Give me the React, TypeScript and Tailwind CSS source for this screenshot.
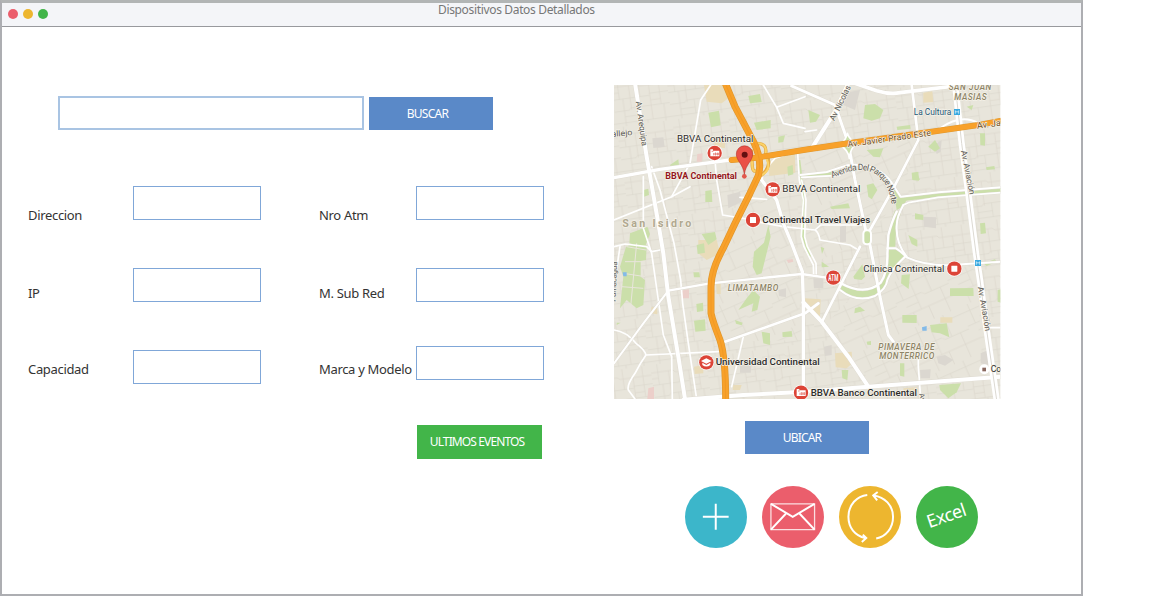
import React from "react";

const parks = [
  "295,98 327,92 332,136 303,142", "415,48 450,42 455,66 420,70", "432,128 482,120 482,145 440,150",
  "286,333 305,330 307,366 286,366", "180,255 205,238 207,256 186,270", "505,170 525,166 520,186 505,188",
  "275,462 315,456 320,478 295,495", "60,460 112,440 120,462 105,500 58,490", "100,330 115,326 117,345 102,350",
  "765,75 795,72 820,90 810,115 785,122 760,115", "595,90 630,105 618,125 600,128", "770,210 820,205 810,232 790,230",
  "955,200 975,180 990,205 975,215", "905,295 920,275 930,300", "770,315 790,310 802,330 785,358 775,350",
  "660,380 715,370 720,385 665,387", "532,260 548,255 550,283 534,287", "915,400 940,405 940,420 915,418",
  "1110,160 1125,160 1125,197 1111,195", "1128,262 1153,258 1155,268 1130,270", "860,140 900,135 902,146 862,150",
  "1110,430 1125,428 1128,460 1112,462", "1070,80 1090,75 1085,90", "48,500 73,488 110,495 108,540 92,543 92,590 105,600 100,675 80,685 50,660 30,685 40,590 30,560",
  "260,495 282,490 285,518 263,522", "250,577 268,577 270,592 252,592", "259,672 279,668 280,693 261,696",
  "252,722 285,718 287,752 256,755", "475,435 482,470 455,580 440,585 428,560 432,515 462,488", "430,630 450,650 442,690 425,695 430,670 385,690 410,655",
  "517,757 545,753 547,770 518,771", "455,755 480,760 480,795 460,790", "375,720 398,728 395,736 378,731",
  "730,590 757,553 765,590 755,600 733,597", "875,585 900,583 896,627 873,610", "1020,625 1090,624 1091,648 1020,648",
  "735,685 750,680 765,692 733,700", "877,705 920,705 920,729 877,728", "960,735 1010,730 1018,772 990,760 965,757",
  "988,915 1053,910 1040,937 1015,955 990,930", "870,850 883,850 883,890 870,887", "695,870 715,870 712,900 697,895",
  "1163,630 1173,628 1173,668 1163,665", "770,785 783,783 783,795 772,794", "635,545 657,560 635,562", "632,500 643,505 636,522",
  "895,465 922,480 922,500 905,492", "905,278 925,275 927,302 907,300",
  "1120,550 1155,538 1160,545 1130,558", "20,735 20,728 32,728",
];

const sand = [
  "282,15 340,15 355,55 335,70 290,65", "310,170 345,168 345,205 315,200", "265,480 320,480 330,520 290,540 265,520",
  "490,235 555,220 556,278 478,288 475,270", "940,38 967,34 970,66 940,68", "585,655 632,658 630,712 612,708 585,675",
  "675,820 725,815 727,850 710,865 677,862", "991,712 1027,712 1027,728 991,728", "252,860 280,855 280,880 254,882",
  "125,680 142,685 142,703 122,700", "318,610 332,610 332,642 320,642", "370,915 395,915 390,930 368,930", "880,925 920,922 925,935 880,937",
];

const blocks = [
  "352,345 390,335 395,365 355,385", "700,40 750,30 735,90 700,75", "972,195 995,180 992,215 980,222",
  "940,410 978,412 978,445 942,440", "610,595 640,595 640,625 612,625", "505,630 528,625 528,652 507,648",
  "980,830 1005,825 1030,840 1005,857 985,850", "930,870 962,868 960,895 932,895", "390,855 425,850 422,878 390,878",
  "127,175 160,172 164,200 130,204", "642,800 665,795 665,825 645,828", "1112,820 1135,810 1135,855 1112,850", "690,440 708,435 708,485 690,487",
];

const pink = ["262,222 278,220 275,245 260,245", "212,632 237,628 237,655 215,655", "115,925 132,920 132,957 112,957", "530,540 548,537 550,545 535,549"];

const lanes = [
  "M302,15 L272,60 L240,250 L185,350 L12,420", "M185,350 L240,320 M100,290 L100,445 L125,520 L160,765 L185,830 L187,957",
  "M125,260 L150,330 L192,490 L212,600 L218,670 L235,790 L260,957",
  "M315,240 L320,300 L338,405 L440,422 M12,500 L45,492 L110,500 L125,515 L150,510",
  "M460,15 L500,82 L520,130 L585,145 M500,82 L585,50",
  "M390,352 L470,358 M450,285 L495,235 L555,215",
  "M12,750 Q50,755 78,790 Q105,810 108,825 L325,815 M108,825 Q90,850 75,880 Q50,915 55,930 L75,957",
  "M400,770 L365,920 M925,820 L925,860 L932,955",
  "M440,425 L520,440 L615,450 Q625,455 630,480 L720,495 L745,510 M615,450 L632,435 L755,435",
  "M563,220 L568,300 L580,360 L574,470 L582,500 L610,555 L611,585 M575,300 L588,360 L584,470 L592,500 L618,550 L619,585",
  "M585,155 L620,150 M1140,743 L1173,743 M30,500 L12,620",
];

const roads: [string, number][] = [
  ["M175,632 L300,610 L575,582 L645,592 L690,608 Q765,650 812,608 Q834,575 832,520 L835,465 Q845,425 860,395", 7],
  ["M175,632 L100,730 L12,850", 6],
  ["M345,785 L585,700 L625,670", 8],
  ["M455,265 L455,300 L500,360 L520,430 L545,490 L577,575 L580,665 L580,945", 10],
  ["M580,667 L635,725 L715,830 L775,920", 12],
  ["M635,727 L750,500 M780,450 L850,325 L925,180 L905,15", 8],
  ["M545,18 L675,75 L715,190 L735,300 L767,450 M780,495 L810,650 L835,765 L850,785", 9],
  ["M715,10 L675,95 L605,205", 12],
  ["M720,5 L800,32 Q840,44 870,38 L1035,18", 11],
  ["M570,285 L650,276 L710,256 Q800,245 845,308 L872,350 L985,337 L1173,322", 6],
  ["M575,292 L690,286 M880,375 L895,368 L985,352 L1173,338", 5],
  ["M832,505 L858,505 Q875,515 890,532 Q940,555 1010,556 L1173,545", 6],
  ["M690,630 Q740,670 795,648 Q830,625 832,600 Q842,570 885,530", 6],
  ["M880,375 Q860,410 860,440 Q858,490 890,530", 6],
  ["M12,293 L150,268 L360,240", 10],
  ["M75,10 L110,230 L145,430 L160,520 L175,650 L205,830 L225,957", 12],
  ["M220,959 L400,945 L585,935 L775,920 L1173,890", 12],
];

const freeway = "M345,8 L375,80 L430,184 Q458,240 445,287 L420,340 L375,430 L340,504 Q303,570 303,620 L303,700 Q308,724 330,780 Q347,830 347,960";
const prado = "M365,240 L440,233 L585,209 L715,190 L965,155 L1100,136 L1180,121";

function Label({ x, y, w, size = 29, fill = "#2d2d2d", weight = 500, italic = false, rotate = 0, spaced = false, children }: {
  x: number; y: number; w?: number; size?: number; fill?: string; weight?: number; italic?: boolean; rotate?: number; spaced?: boolean; children: string;
}) {
  return (
    <text x={x} y={y} textLength={w} lengthAdjust={spaced ? "spacing" : "spacingAndGlyphs"} fontSize={size} fill={fill}
      fontWeight={weight} fontStyle={italic ? "italic" : "normal"} transform={`rotate(${rotate} ${x} ${y})`}
      stroke="#f6f3ea" strokeWidth="4" strokeLinejoin="round" paintOrder="stroke">{children}</text>
  );
}

function Poi({ x, y, kind }: { x: number; y: number; kind: "bank" | "square" | "atm" | "school" }) {
  return (
    <g transform={`translate(${x} ${y})`}>
      <circle r="24" fill="#fff" opacity=".8" />
      <circle r="21.5" fill="#dc4437" />
      {kind === "square" && <rect x="-9" y="-9" width="18" height="18" rx="1" fill="#fff" />}
      {kind === "bank" && <g><path d="M-13,-11 H-5 V-7 H14 V10 H-13Z" fill="#fff" /><path d="M-9,-5 h5 M-3,0 v7 M1,0 h3 v6 h-3z M8,0 h3 v6 h-3z" stroke="#dc4437" strokeWidth="1.8" fill="none" /></g>}
      {kind === "atm" && <text x="-15" y="10" textLength="30" lengthAdjust="spacingAndGlyphs" fontSize="27" fontWeight="700" fill="#fff">ATM</text>}
      {kind === "school" && <path d="M-16,-4 L0,-12 L16,-4 L0,4Z M-12,1 L0,8 L12,1 V8 Q0,17 -12,8Z" fill="#fff" />}
    </g>
  );
}

function CityMap() {
  return (
    <svg className="block h-[314px] w-[387px] shrink-0" viewBox="12 15 1161 942" fontFamily="Roboto, sans-serif">
      <defs>
        <pattern id="streets" width="168" height="144" patternUnits="userSpaceOnUse" patternTransform="rotate(-8)">
          <path d="M0,24 H66 L72,30 H168 M0,62 H110 M110,56 H168 M0,98 H45 L50,92 H168 M0,134 H168 M20,0 V62 M52,24 V98 M82,0 V62 M112,30 V134 M142,0 V92 M30,62 V144 M74,92 V134 M150,92 V144 M96,134 V144 M0,42 H20 M112,76 H142 M30,116 H74" fill="none" stroke="#dbd7cc" strokeWidth="2" />
        </pattern>
        <pattern id="streetsEast" width="170" height="150" patternUnits="userSpaceOnUse" patternTransform="rotate(-24)">
          <path d="M0,20 H170 M0,62 H84 L92,70 H170 M0,108 H170 M25,0 V62 M65,20 V108 M114,0 V70 M142,70 V150 M38,108 V150 M88,108 V150 M25,85 H65" fill="none" stroke="#dbd7cc" strokeWidth="2" />
        </pattern>
        <clipPath id="mapFrame"><rect x="12" y="15" width="1159" height="942" /></clipPath>
      </defs>
      <g clipPath="url(#mapFrame)">
        <rect x="12" y="15" width="1161" height="942" fill="#e8e5db" />
        <rect x="12" y="15" width="1161" height="942" fill="url(#streets)" />
        <path d="M345,480 L450,270 L550,500 L580,780 L345,785 L303,650Z M585,220 L925,180 L870,354 L755,490 L580,560Z M810,560 H1100 L1120,890 L780,920 L650,730Z" fill="#e8e5db" />
        <path d="M345,480 L450,270 L550,500 L580,780 L345,785 L303,650Z M585,220 L925,180 L870,354 L755,490 L580,560Z M810,560 H1100 L1120,890 L780,920 L650,730Z" fill="url(#streetsEast)" />
        {blocks.map((p) => <polygon key={p} points={p} fill="#dbd7d0" />)}
        {sand.map((p) => <polygon key={p} points={p} fill="#e9dcba" />)}
        {pink.map((p) => <polygon key={p} points={p} fill="#eccfca" />)}
        {parks.map((p) => <polygon key={p} points={p} fill="#cbdfaa" />)}
        <path d="M50,500 L108,510 M45,545 L105,545 M40,580 L105,590 M35,620 L100,625 M80,490 L62,680" stroke="#e9e5dc" strokeWidth="3" />
        <path d="M690,610 Q765,650 812,608 Q834,575 832,505 L858,505 L885,530 Q842,570 832,600 Q830,625 795,648 Q740,670 690,630Z" fill="#cbdfaa" />
        <path d="M575,289 L700,276 M872,358 L985,345 L1173,330" fill="none" stroke="#cbdfaa" strokeWidth="12" />
        <path d="M850,325 L872,350 L890,360 L878,380 L860,390Z" fill="#cbdfaa" />
        <path d="M864,395 Q846,435 846,500" fill="none" stroke="#cbdfaa" strokeWidth="20" />
        <path d="M568,240 L580,340 L579,470 L600,530" fill="none" stroke="#cbdfaa" strokeWidth="6" />
        <path d="M38,577 h12 v12 h-10z M936,742 l14,-4 v14 h-13z" fill="#83bae8" />

        <g fill="none" strokeLinejoin="round" strokeLinecap="round">
          {lanes.map((d) => <path key={d} d={d} stroke="#fff" strokeWidth="5" />)}
          {roads.map(([d, w]) => <path key={d} d={d} stroke="#dedad0" strokeWidth={w + 2} />)}
          {roads.map(([d, w]) => <path key={d} d={d} stroke="#fff" strokeWidth={w} />)}
          <rect x="760" y="451" width="23" height="42" rx="10" fill="#cbdfaa" stroke="#fff" strokeWidth="6" />
          <path d="M690,195 Q708,180 712,160 Q718,180 740,190 Q720,205 718,235 Q715,210 690,195Z" fill="#cbdfaa" stroke="#fff" strokeWidth="5" />
          <path d="M990,145 Q1055,100 1105,130" stroke="#fff" strokeWidth="6" />
          <path d="M1035,10 L1055,190 L1075,340 L1098,520 L1110,600 L1130,750 L1160,960" stroke="#fff" strokeWidth="19" />
          <path d="M1035,10 L1055,190 L1075,340 L1098,520 L1110,600 L1130,750 L1160,960" stroke="#dcd9d2" strokeWidth="3" />
          <path d="M441,190 Q472,190 467,220 Q490,255 455,285 M424,212 L427,260 Q428,278 442,272" stroke="#e4aa45" strokeWidth="10" />
          <path d="M441,190 Q472,190 467,220 M470,237 Q485,270 455,285 M424,212 L427,260 Q428,278 442,272" stroke="#fbd268" strokeWidth="6" />
          <path d={freeway} stroke="#df972e" strokeWidth="21" />
          <path d={prado} stroke="#df972e" strokeWidth="18" />
          <path d={freeway} stroke="#f8a12a" strokeWidth="17" />
          <path d={prado} stroke="#f8a12a" strokeWidth="15" />
          <path d={freeway} stroke="#ed9622" strokeWidth="2" />
        </g>

        <g>
          <Label x={77} y={65} w={135} size={25} weight={400} rotate={82} fill="#5d5a55">Av. Arequipa</Label>
          <Label x={5} y={171} w={63} size={25} weight={400} rotate={-5} fill="#5d5a55">allejo</Label>
          <Label x={17} y={665} w={120} size={23} weight={400} rotate={-88} fill="#5d5a55">Pumacagua</Label>
          <Label x={673} y={124} w={115} size={25} weight={400} rotate={-64} fill="#5d5a55">Av Nicolas</Label>
          <Label x={714} y={202} w={252} size={26} weight={400} rotate={-8} fill="#704e1c" spaced>Av. Javier Prado Este</Label>
          <Label x={1102} y={146} size={27} weight={400} rotate={-7} fill="#704e1c">Av. Javier</Label>
          <Label x={1053} y={213} w={134} size={25} weight={400} rotate={79} fill="#5d5a55">Av. Aviación</Label>
          <Label x={1103} y={622} w={134} size={25} weight={400} rotate={80} fill="#5d5a55">Av. Aviación</Label>
          <path id="parkAvenue" d="M667,294 Q690,284 720,274 Q780,260 815,298 Q846,335 848,402" fill="none" />
          <text fontSize="26" fill="#5d5a55" stroke="#f2efe5" strokeWidth="4" paintOrder="stroke">
            <textPath href="#parkAvenue" textLength="242" lengthAdjust="spacing">Avenida Del Parque Norte</textPath>
          </text>
          <Label x={37} y={440} w={207} size={32} weight={700} spaced fill="#b0a78f">San Isidro</Label>
          <Label x={353} y={632} w={152} size={25} italic spaced fill="#8d8467">LIMATAMBO</Label>
          <Label x={1016} y={31} w={128} size={25} italic spaced fill="#8d8467">SAN JUAN</Label>
          <Label x={1033} y={60} w={97} size={25} italic spaced fill="#8d8467">MASIAS</Label>
          <Label x={805} y={809} w={169} size={25} italic spaced fill="#8d8467">PIMAVERA DE</Label>
          <Label x={808} y={837} w={165} size={25} italic spaced fill="#8d8467">MONTERRICO</Label>
          <Label x={201} y={186} w={229} weight={400}>BBVA Continental</Label>
          <Label x={166} y={297} w={215} size={27} weight={700} fill="#94151c">BBVA Continental</Label>
          <Label x={517} y={337} w={234} weight={400}>BBVA Continental</Label>
          <Label x={457} y={430} w={324}>Continental Travel Viajes</Label>
          <Label x={760} y={576} w={243} weight={400}>Clinica Continental</Label>
          <Label x={317} y={855} w={312}>Universidad Continental</Label>
          <Label x={602} y={948} w={319}>BBVA Banco Continental</Label>
          <Label x={911} y={105} w={113} size={26} weight={400} fill="#245778">La Cultura</Label>
          <Label x={1142} y={876} size={26} weight={400}>Continental</Label>
          <Label x={927} y={942} size={22} weight={400} fill="#5d5a55" rotate={75}>Av</Label>
        </g>
        <Poi x={314} y={219} kind="bank" />
        <Poi x={488} y={328} kind="bank" />
        <Poi x={429} y={420} kind="square" />
        <Poi x={670} y={593} kind="atm" />
        <Poi x={1033} y={566} kind="square" />
        <Poi x={289} y={847} kind="school" />
        <Poi x={573} y={938} kind="bank" />
        <circle cx="1123" cy="868" r="15" fill="#fff" /><rect x="1117" y="863" width="11" height="11" fill="#89685f" />
        {[[1032, 87], [1095, 540]].map(([x, y]) => (
          <g key={x}><rect x={x} y={y} width="18" height="18" fill="#39a9e0" /><path d={`M${x + 4},${y + 14} v-9 l5,5 l5,-5 v9`} fill="none" stroke="#fff" strokeWidth="2" /></g>
        ))}
        <circle cx="403" cy="289" r="7" fill="#e2584c" />
        <path d="M403,283 C400,252 379,243 379,222 A24,24 0 0 1 428,222 C428,243 407,252 403,283Z" fill="#ea5148" stroke="#b83b33" strokeWidth="2" />
        <circle cx="404" cy="224" r="9" fill="#641010" />
      </g>
    </svg>
  );
}

const button = "flex items-center justify-center font-['Noto_Sans',sans-serif] text-[12px] whitespace-nowrap text-white";

function Field({ text, id, labelClass }: { text: string; id: string; labelClass: string }) {
  return (
    <div className="flex h-[34px] items-start">
      <label htmlFor={id} className={`shrink-0 font-['Noto_Sans',sans-serif] text-[13px] leading-[18px] tracking-[-0.33px] whitespace-nowrap text-[#333] ${labelClass}`}>{text}</label>
      <input id={id} className="block h-[34px] w-[128px] shrink-0 border-x border-y-[1.5px] border-[#80a7d8] bg-white outline-none" />
    </div>
  );
}

export default function App() {
  return (
    <div className="h-[596px] w-full overflow-hidden bg-white">
      <div className="flex h-[596px] w-[1083px] flex-col border-2 border-t-[3px] border-[#adaeb2] border-t-[#b2b5b5] bg-white">
        <header className="flex h-6 shrink-0 border-b border-[#98999d] bg-[#f4f5f8]">
          <div className="flex w-[436px] items-center gap-[5px] pl-[6px]">
            <span className="-mt-[2px] size-[10px] rounded-full bg-[#eb5e6c]" />
            <span className="-mt-[2px] size-[10px] rounded-full bg-[#edb62f]" />
            <span className="-mt-[2px] size-[10px] rounded-full bg-[#42b549]" />
          </div>
          <h1 className="-mt-[2px] font-['Noto_Sans',sans-serif] text-[12px] leading-[18px] tracking-[-0.34px] text-[#777]">Dispositivos Datos Detallados</h1>
        </header>

        <main className="flex">
          <section className="w-[612px]">
            <div className="mt-[69px] ml-[56px] flex gap-[5px]">
              <input aria-label="Buscar" className="block h-[34px] w-[306px] border-2 border-[#a9c4e3] bg-white outline-none" />
              <button className={`${button} mt-px h-[33px] w-[124px] bg-[#5a89c8] pr-[7px] tracking-[-0.7px]`}>BUSCAR</button>
            </div>
            <div className="mt-14 ml-[26px] flex gap-[58px]">
              <div className="flex flex-col gap-12">
                <Field id="direccion" text="Direccion" labelClass="mt-5 w-[105px]" />
                <Field id="ip" text="IP" labelClass="mt-4 w-[105px]" />
                <Field id="capacidad" text="Capacidad" labelClass="mt-[10px] w-[105px]" />
              </div>
              <div>
                <Field id="atm" text="Nro Atm" labelClass="mt-5 w-[96.5px]" />
                <div className="mt-12"><Field id="subred" text="M. Sub Red" labelClass="mt-4 w-[96.5px]" /></div>
                <div className="mt-11"><Field id="modelo" text="Marca y Modelo" labelClass="mt-[14px] w-[96.5px]" /></div>
                <button className={`${button} mt-[45px] ml-[98px] h-[34px] w-[125px] bg-[#42b549] pr-[5px] tracking-[-0.88px]`}>ULTIMOS EVENTOS</button>
              </div>
            </div>
          </section>

          <section className="flex flex-col pt-[58px]">
            <CityMap />
            <button className={`${button} mt-[22px] ml-[131px] h-[33px] w-[124px] bg-[#5a89c8] pr-[10px] tracking-[-0.8px]`}>UBICAR</button>
            <div className="mt-[32px] ml-[71px] flex gap-[15.5px]">
              <button aria-label="Agregar" className="size-[61.5px] rounded-full bg-[#3cb6ca]">
                <svg viewBox="0 0 62 62" fill="none" stroke="#fff" strokeWidth="2"><path d="M18 31h26M31 18v26" /></svg>
              </button>
              <button aria-label="Correo" className="size-[61.5px] rounded-full bg-[#eb5e6c]">
                <svg viewBox="0 0 62 62" fill="none" stroke="#fff"><path d="M9 18h44v26H9z" strokeWidth="1.3" opacity=".8" /><path d="M9 18l22 13 22-13M9 44l15-16M53 44L38 28" strokeWidth="2" /></svg>
              </button>
              <button aria-label="Actualizar" className="size-[61.5px] rounded-full bg-[#edb62f]">
                <svg viewBox="0 0 62 62" fill="none" stroke="#fff" strokeWidth="2"><path d="M28.5 9C18 10 9.5 19 9.5 31C9.5 42 16 50 26.5 52.5M35 9.5C46 11 54.5 19.500 54.500 31C54.5 43 47 51 37.5 53M39 6l-4.5 3.500 4 5M24 49l3.500 3.500-4.500 4" /></svg>
              </button>
              <button className="flex size-[61.5px] items-center justify-center rounded-full bg-[#42b549] font-['Noto_Sans',sans-serif] text-[18px] tracking-[-0.5px] text-white">
                <span className="-mt-[3px] -ml-[2px] -rotate-[19deg]">Excel</span>
              </button>
            </div>
          </section>
        </main>
      </div>
    </div>
  );
}
